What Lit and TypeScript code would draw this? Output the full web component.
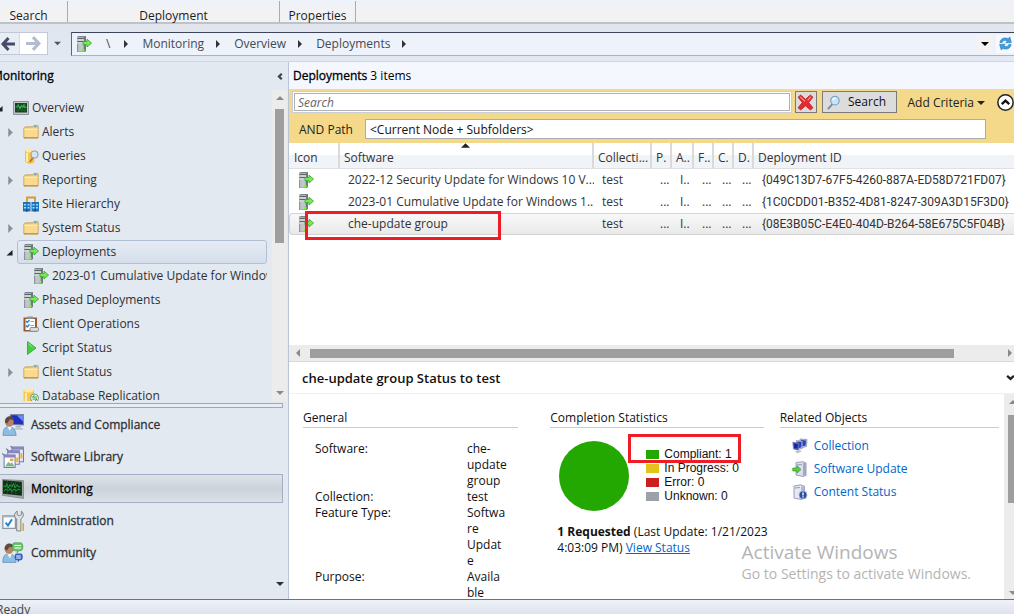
import { LitElement, html, svg, css, nothing } from "lit";
import { customElement, property } from "lit/decorators.js";
import { classMap } from "lit/directives/class-map.js";

const glyphs: Record<string, unknown> = {
  deploy: svg`
    <path d="M1 1 3 0h7v15l-2 1H1z" fill="#aab1b5"/><path d="M8 1l2-1v15l-2 1z" fill="#6f787d"/>
    <path d="M1 1 3 0h7L8 1z" fill="#7c858a"/>
    <path d="M1.500 2.500H8M1.500 5.500H8" stroke="#5d666b"/><path d="M1.500 4H8M1.500 7H8" stroke="#eef2f3"/>
    <path d="M1.500 8H7v7H1.500z" fill="#c0c7ca"/><path d="M1 8h1.200v8H1z" fill="#8d969b"/>
    <path d="M6 13h2.500v2H6z" fill="#7cf51e"/>
    <path d="M7 5.500h4V3.200l4.500 3.900L11 11V8.700H7z" fill="#7fe65a" stroke="#35ae2a" stroke-width=".9"/>`,
  folder: svg`
    <path d="M.8 4 2 2.800h7.500L11 1.300h3.500l.7 1V14H.8z" fill="#efc66d" stroke="#c39a44" stroke-width=".7"/>
    <path d="M1.500 5h13v8.300h-13z" fill="#f9da90"/><path d="M1.500 4.500h13V6h-13z" fill="#fdeab6"/>
    <path d="M1 13.800h14" stroke="#b58a35"/><path d="M11 2.500h2.500" stroke="#5ea0cf"/>`,
  monitor: svg`
    <path d="M.5 1.500h15v13H.5z" fill="#c3c7c9" stroke="#8d9397"/><path d="M2 3h12v9.500H2z" fill="#1c3a28"/>
    <path d="M2.500 7H4l1.200-2L7 8.500 8.500 5.500l1.200 2L11 5l.8 2.300H13.500" fill="none" stroke="#2fc848" stroke-width="1.200"/>
    <path d="M2.500 10h11M5 3v9M9 3v9M12 3v9" stroke="#1f7a35" stroke-width=".6"/>`,
  queries: svg`
    <path d="M2.500 2.500v10.500c0 3 8.500 3 8.500 0V2.500z" fill="#f7c84b" stroke="#dba22c" stroke-width=".5"/><ellipse cx="6.700" cy="2.500" rx="4.200" ry="2" fill="#fde9a0"/>
    <path d="M4 5v9" stroke="#fdebac" stroke-width="2"/>
    <path d="M10 9.500 6.800 14" stroke="#b67a2c" stroke-width="2"/>
    <circle cx="11.500" cy="6.500" r="3.500" fill="#d3e5f3" stroke="#95a5b1" stroke-width="1.200"/>`,
  site: svg`
    <path d="M4 6V1.500h8V6" fill="none" stroke="#d39c2c" stroke-width="1.800"/>
    <path d="M0 6h7.500v9.500H0zM8.500 6H16v9.500H8.500z" fill="#1c74bd"/>
    <path d="M1 8h2v1.500H1zm3.500 0h2v1.500h-2zM1 11h2v1.500H1zm3.500 0h2v1.500h-2zM9.500 8h2v1.500h-2zM13 8h2v1.500h-2zM9.500 11h2v1.500h-2zm3.500 0h2v1.500h-2z" fill="#9fdcff"/>
    <path d="M3 13.500h1.500v2H3zm8.500 0H13v2h-1.500z" fill="#0a3f78"/>`,
  clipboard: svg`
    <path d="M.5 1.500h13.500v14H.5z" fill="#9a5a2b"/><path d="M2.500 3h9.500v11H2.500z" fill="#fff"/>
    <path d="M4.500.5h5.500v2.500H4.500z" fill="#8a949b"/>
    <path d="m3 5 1.200 1.500L6.500 4M3 9.500 4.200 11 6.500 8.500" fill="none" stroke="#2684c6" stroke-width="1.400"/>
    <path d="M7.500 5.500H11M7.500 9.500H11" stroke="#88aaaa"/>
    <rect x="7" y="11.500" width="8.500" height="3.800" rx="1" fill="#d9dde0" stroke="#737b80" stroke-width=".8"/>`,
  script: svg`<path d="M4.500 1.500 13 8l-8.500 6.500z" fill="#44cc44" stroke="#3fae45"/><path d="M5.500 3.500 9.500 7" stroke="#9bf09b"/>`,
  database: svg`
    <path d="M1 2.500v11c0 2.500 9.500 2.500 9.500 0v-11z" fill="#f7c84b" stroke="#dba22c" stroke-width=".5"/><ellipse cx="5.700" cy="2.500" rx="4.700" ry="2" fill="#fde9a0"/>
    <path d="M2.800 5v8.500" stroke="#fdf0c0" stroke-width="2"/>
    <circle cx="11.500" cy="10" r="4" fill="#eef6ee" stroke="#7f8f8f"/><path d="M14 9H9.500l2-1.800M9.500 11H14l-2 1.800" stroke="#27a227" fill="none"/>`,
  assets: svg`
    <path d="M8 .8 20.500.5v10L8 10z" fill="#1d2fc0" stroke="#7d86a0"/><path d="M14 1.200h6v6z" fill="#6f8cf5"/>
    <path d="M13 11.500h5V13h-5zM12 13.500h8v1.300h-8z" fill="#aab3bd"/>
    <path d="M1 20.500C1 14 3 12 6.500 12s6.500 2 7 8.500z" fill="#8fbde2" stroke="#5d8fbc" stroke-width=".7"/>
    <path d="m5 12 2.500 4 2-4z" fill="#eaf4fb"/><circle cx="7" cy="7.700" r="4.200" fill="#b98560"/><path d="M2.800 8c-.5-7 9-7.500 8.500-2L7.500 5 5 9z" fill="#5d4a3f"/>`,
  library: svg`
    <path d="M9.500 1h11v14h-11z" fill="#e7e8f7" stroke="#7778ac"/><path d="M9.500 1h11v2.500h-11z" fill="#8788bd"/>
    <path d="M5.500 4.500h11v13h-11z" fill="#f0f1fa" stroke="#7778ac"/><path d="M5.500 4.500h11V7h-11z" fill="#8788bd"/>
    <path d="M2 8.500h10.500v12H2z" fill="#fff" stroke="#7778ac"/><path d="M2 8.500h10.500V11H2z" fill="#8788bd"/>
    <path d="m3 19.500 3-4.500 2 2 1.500-1.500 2.500 4z" fill="#7ab88a"/><path d="M7.500 12H11v2.500H7.500z" fill="#f0a34c"/>
    <path d="M17.500 7h2v5h-2zM13.500 11h2v4.500h-2z" fill="#f2b13e"/><path d="m0 7 2.500 2M4 2.500l2 2M8 0l1.500 1.500" stroke="#6a6ba0"/>`,
  screen: svg`
    <path d="M.3 1.500 20.500 2.500V19.500L.3 16.500z" fill="#a3a8a6" stroke="#7b817f" stroke-width=".7"/><path d="M1 2.200 19 3.500v13.500L1 15z" fill="#10301a"/>
    <path d="m1.500 7.500 2 1 1-3 1.500 4 1.500-3 2 2 1.500-3 1.500 4 2-3 1.500 2h1.500M2 12.500l2-2 2 1.500 1.500-2 2 3 2-2.500 2 2 2-2 2 1" fill="none" stroke="#1fb53a" stroke-width=".9"/>
    <path d="M5 3v12M9 3.300v12M13 3.600v12" stroke="#167a2a" stroke-width=".5"/>`,
  admin: svg`
    <path d="M.8 5.500h12v12H.8z" fill="#fbfcfd" stroke="#8e979d" stroke-width="1.200"/><path d="M.8 5.500h12v1.500H.8z" fill="#a9b2b8"/>
    <path d="m3.500 12 2.200 2.800L9.500 8.800" fill="none" stroke="#1988d8" stroke-width="1.900"/>
    <path d="M14 20V8.500C11 6.500 11.500 3 14.500 1v3.500l2 1 2-1V1c2.500 2 2.500 5.500-.5 7.500V20z" fill="#dfe2e4" stroke="#7b8286" stroke-width=".9"/>
    <path d="M19.500 12.500H21V20h-1.500z" fill="#e8a920"/>`,
  community: svg`
    <path d="M.8 19.500c0-6.500 2-8 6-8s6.500 2 6.500 8z" fill="#8fbde2" stroke="#5d8fbc" stroke-width=".7"/><path d="m5 11.500 2.500 4 2-4z" fill="#eaf4fb"/>
    <circle cx="6.700" cy="7" r="4.200" fill="#b98560"/><path d="M2.500 7c-.5-7 9-7 8.500-1.500L7.200 4.500 4.800 8z" fill="#5d4a3f"/>
    <path d="M11.500.8H18c2.500 0 2.500 7.500 0 7.500h-2l-1.500 2v-2h-3c-2 0-2-7.500 0-7.500z" fill="#6cc66e" stroke="#45a04b" stroke-width=".7"/>
    <path d="M12 3.300h6M12 5.700h6" stroke="#fff"/><path d="M13.500 11h4.500c2.500 0 2.500 6.500 0 6.500h-1l-2 2v-2h-1.500c-1.800 0-1.800-6.500 0-6.500z" fill="#2f63c0"/><path d="M13.500 13.300H18M13.500 15.300H18" stroke="#fff"/>`,
  collection: svg`
    <path d="m8 1 7 .5-.5 7-6 1.500z" fill="#b9c4dc" stroke="#7f89a5" stroke-width=".7"/><path d="m9 2 5 .4-.4 5.200-4.300 1z" fill="#2640c2"/>
    <path d="m4.500 2.500 6 .8-.3 7.200-5.700 1z" fill="#c8d1e6" stroke="#7f89a5" stroke-width=".7"/><path d="m5.300 3.500 4.300.6-.3 5.500-3.800.7z" fill="#233cc0"/>
    <path d="m.8 4.200 6 1-.3 7L1.500 11z" fill="#4a63d8" stroke="#6f7896" stroke-width=".7"/><path d="m1.800 5.400 4 .7-.3 4.700-3.500-.8z" fill="#1428a8"/>
    <path d="m3 13.500 4-1.500 3 1-4.500 2.500z" fill="#bfc3c8"/>`,
  update: svg`
    <path d="m4 1.500 7-.8 3 1.300v12.500l-3 1-7-1.500z" fill="#dcdeee" stroke="#8689ad" stroke-width=".8"/><path d="M11 2v13l3-1V2z" fill="#a3a5c9"/>
    <path d="m5 4 5-.5" stroke="#9799bf"/><path d="M.8 7H5V4.800L9 8.500 5 12V10H.8z" fill="#57d13c" stroke="#2c9b20" stroke-width=".7"/>`,
  content: svg`
    <path d="m2 2 7-1.200 3.500 1.500V14l-3.500 1.500L2 14z" fill="#e6e8f4" stroke="#8689ad" stroke-width=".8"/><path d="M9 2.500v12l3.500-1V2.300z" fill="#b3b5d3"/><path d="m3 4 5-.5" stroke="#9799bf"/>
    <circle cx="11" cy="11" r="4" fill="#264f9f" stroke="#a8bbe0" stroke-width=".8"/><path d="M11 8.500v3M11 12.300v1.200" stroke="#fff" stroke-width="1.400"/>`,
  back: svg`<path d="M8.500 2 3 8l5.500 6M3.500 8H15" fill="none" stroke="#444c69" stroke-width="3"/>`,
  forward: svg`<path d="M7.500 2 13 8l-5.500 6M12.500 8H1" fill="none" stroke="#b4bccd" stroke-width="3"/>`,
  refresh: svg`
    <path d="M2 7C2.500 2.500 7.500.8 11 3l1.500-2 1.800 6-6 .3 1.500-1.800C7.500 4 5 4.500 4.500 7z" fill="#35a3ea" stroke="#1c6fae" stroke-width=".6"/>
    <path d="M14 9c-.5 4.500-5.500 6.200-9 4l-1.500 2-1.800-6 6-.3-1.500 1.800C8.500 12 11 11.500 11.500 9z" fill="#35a3ea" stroke="#1c6fae" stroke-width=".6"/>`,
  cross: svg`<path d="m1 3 2.500-2L8 5l4.500-4L15 3l-4 5 4 5-2.500 2L8 11l-4.500 4L1 13l4-5z" fill="#e8282c" stroke="#b8272b" stroke-width=".8"/><path d="M3 2.700 7.500 7M13 2.700 10 6" stroke="#ff9c9c"/>`,
  lens: svg`<path d="M7 9.500 2 15" stroke="#7d8a96" stroke-width="2"/><circle cx="9.500" cy="6" r="4.500" fill="#c9e4f7" stroke="#7ba3c4" stroke-width="1.300"/><path d="M7 5.500C7.500 4 9 3 10.500 3.500" stroke="#fff" fill="none" stroke-width="1.300"/>`,
  collapse: svg`<circle cx="8" cy="8" r="7.200" fill="#fff" stroke="#222" stroke-width="1.400"/><path d="M4.500 9.500 8 6.200l3.500 3.300" fill="none" stroke="#111" stroke-width="2.200"/>`,
  chevLeft: svg`<path d="M12 3 7 8l5 5" fill="none" stroke="#444" stroke-width="4"/>`,
  chevDown: svg`<path d="M2 5l6 5.500L14 5" fill="none" stroke="#222" stroke-width="4"/>`,
  triRight: svg`<path d="M4 0l8 8-8 8z" fill="currentColor"/>`,
  triLeft: svg`<path d="M12 0 4 8l8 8z" fill="currentColor"/>`,
  triDown: svg`<path d="M0 4h16L8 12z" fill="currentColor"/>`,
  triUp: svg`<path d="M0 12h16L8 4z" fill="currentColor"/>`,
  triOpen: svg`<path d="M15 2v13H1z" fill="currentColor"/>`,
};

const large = ["assets", "library", "screen", "admin", "community"];

const icon = (name: string, size = 16) => {
  const box = large.includes(name) ? 21 : 16;
  return html`<svg width=${size} height=${size} viewBox="0 0 ${box} ${box}" aria-hidden="true">${glyphs[name]}</svg>`;
};

interface TreeNode { label: string; icon: string; level: number; state?: "open" | "closed"; selected?: boolean; }

const tree: TreeNode[] = [
  { label: "Overview", icon: "monitor", level: 0, state: "open" },
  { label: "Alerts", icon: "folder", level: 1, state: "closed" },
  { label: "Queries", icon: "queries", level: 1 },
  { label: "Reporting", icon: "folder", level: 1, state: "closed" },
  { label: "Site Hierarchy", icon: "site", level: 1 },
  { label: "System Status", icon: "folder", level: 1, state: "closed" },
  { label: "Deployments", icon: "deploy", level: 1, state: "open", selected: true },
  { label: "2023-01 Cumulative Update for Windows", icon: "deploy", level: 2 },
  { label: "Phased Deployments", icon: "deploy", level: 1 },
  { label: "Client Operations", icon: "clipboard", level: 1 },
  { label: "Script Status", icon: "script", level: 1 },
  { label: "Client Status", icon: "folder", level: 1, state: "closed" },
  { label: "Database Replication", icon: "database", level: 1 },
];

const workspaces = [
  ["Assets and Compliance", "assets"],
  ["Software Library", "library"],
  ["Monitoring", "screen"],
  ["Administration", "admin"],
  ["Community", "community"],
];

const deployments = [
  ["2022-12 Security Update for Windows 10 V...", "{049C13D7-67F5-4260-887A-ED58D721FD07}"],
  ["2023-01 Cumulative Update for Windows 1...", "{1C0CDD01-B352-4D81-8247-309A3D15F3D0}"],
  ["che-update group", "{08E3B05C-E4E0-404D-B264-58E675C5F04B}"],
];

const base = css`
  * { box-sizing: border-box; }
  svg { display: block; flex: none; }
  button { font: inherit; color: inherit; border: 0; background: none; padding: 0; margin: 0; display: flex; align-items: center; }
  h1, h2, h3, p, ul, dl, dd { margin: 0; padding: 0; list-style: none; font-weight: normal; }
`;

@customElement("console-sidebar")
export class ConsoleSidebar extends LitElement {
  static styles = [base, css`
    :host { flex: 0 0 289px; display: flex; flex-direction: column; min-height: 0; background: #e2e9f1; border-right: 1px solid #b9c5d6; color: #2e3134; overflow: hidden; }
    .head { display: flex; align-items: center; justify-content: space-between; height: 28px; padding-right: 4px; flex: none; }
    .title { font-size: 12px; color: #000; margin-left: -8px; -webkit-text-stroke: 0.3px #000; }
    .body { flex: 1; display: flex; min-height: 0; }
    .tree { flex: 1; min-width: 0; overflow: hidden; padding: 6px 5px 0 0; }
    .node { display: flex; align-items: center; height: 24px; overflow: hidden; white-space: nowrap; }
    .twisty { flex: none; width: 17px; padding-left: 6px; color: #8c9096; }
    .twisty.open { color: #222; }
    .level0 .twisty { width: 13px; padding: 0; margin-left: -4px; margin-right: 4px; }
    .level2 .twisty { width: 27px; }
    .pill { display: flex; align-items: center; gap: 3px; height: 24px; padding-left: 6px; flex: 1; min-width: 0; overflow: hidden; }
    .level0 .pill { padding-left: 0; }
    .selected .pill { padding-left: 5px; border: 1px solid #b3bfd3; border-radius: 3px; background: linear-gradient(#e6ecf5, #d5deeb); }
    .scroll { flex: 0 0 15px; margin-right: 1px; background: #ececec; display: flex; flex-direction: column; align-items: center; padding: 4px 0; color: #8a8a8a; }
    .thumb { width: 9px; height: 134px; margin: 7px 0 auto 0; background: #9e9e9e; }
    .grip { flex: none; height: 5px; margin: 2px 5px 1px 0; border: 1px solid #a0a8b6; border-left: 0; background: #e8edf4; }
    .spaces { flex: none; padding-right: 5px; }
    .space { width: 100%; height: 32px; gap: 7px; padding-left: 2px; font-size: 12px; -webkit-text-stroke: 0.3px currentColor; }
    .space.current { height: 29px; margin: 1px 0 2px; color: #000; border: 1px solid #a7aec6; border-left: 0; background: linear-gradient(#dfe3e9, #ccd2da 50%, #dce1e8); }
    .more { flex: none; display: flex; justify-content: flex-end; padding: 11px 4px 11px 0; }
  `];

  @property({ attribute: false }) nodes: TreeNode[] = tree;

  render() {
    return html`
      <div class="head"><h2 class="title">Monitoring</h2><button aria-label="Collapse pane">${icon("chevLeft", 9)}</button></div>
      <div class="body">
        <div class="tree" role="tree">
          ${this.nodes.map((n) => html`
            <div class=${classMap({ node: true, [`level${n.level}`]: true, selected: !!n.selected })} role="treeitem">
              <span class=${classMap({ twisty: true, open: n.state === "open" })}>
                ${n.state ? icon(n.state === "open" ? "triOpen" : "triRight", n.state === "open" ? 7 : 9) : nothing}
              </span>
              <span class="pill">${icon(n.icon)}<span>${n.label}</span></span>
            </div>`)}
        </div>
        <div class="scroll">${icon("triUp", 8)}<div class="thumb"></div>${icon("triDown", 8)}</div>
      </div>
      <div class="grip"></div>
      <nav class="spaces">
        ${workspaces.map(([label, glyph]) => html`
          <button class=${classMap({ space: true, current: label === "Monitoring" })}>${icon(glyph, 22)}${label}</button>`)}
      </nav>
      <div class="more"><button aria-label="Configure buttons">${icon("triDown", 8)}</button></div>`;
  }
}

@customElement("deployment-list")
export class DeploymentList extends LitElement {
  static styles = [base, css`
    :host { display: flex; flex-direction: column; flex: 0 0 auto; background: #fff; color: #333; min-width: 0; }
    .title { height: 27px; line-height: 27px; padding-left: 4px; background: #f4f7fd; color: #000; font-size: 12px; }
    .name { -webkit-text-stroke: 0.3px #000; }
    .filters { background: #f4d98a; padding: 2px 0 3px 3px; color: #222; }
    .line { display: flex; align-items: center; }
    .query { flex: 1; min-width: 0; height: 22px; border: 1px solid #c9ced6; outline: 1px solid #aeb3b9; outline-offset: -3px; background: #fff; padding: 0 5px; font: italic 12px "Open Sans", sans-serif; }
    .query::placeholder { color: #666; opacity: 1; }
    .tool { height: 22px; border: 1px solid #7a7a7a; background: #dcdcdc; justify-content: center; color: #111; }
    .clear { width: 22px; margin: 0 5px 0 3px; }
    .find { width: 75px; gap: 7px; padding-right: 6px; }
    .add { gap: 3px; margin: 0 12px 0 11px; padding-top: 2px; }
    .second { height: 27px; padding: 5px 28px 0 7px; }
    .second label { width: 66px; flex: none; padding-top: 2px; }
    .path { flex: 1; min-width: 0; height: 20px; border: 1px solid #a9acb0; background: #fff; padding: 0 4px; font: 12px "Open Sans", sans-serif; color: #111; }
    .wrap { height: 202px; overflow: hidden; }
    table { width: 100%; table-layout: fixed; border-collapse: separate; border-spacing: 0; }
    th, td { font-weight: normal; text-align: left; padding: 0; white-space: nowrap; overflow: hidden; line-height: 16px; }
    th { height: 26px; padding: 4px 0 0 4px; border-right: 2px solid #dadada; border-bottom: 1px solid #e0e0e0; background: linear-gradient(#fff 50%, #f0f4f8 50%); }
    th:first-child { padding-left: 5px; }
    th:last-child { border-right: 0; }
    .sorted { position: relative; overflow: visible; }
    .sort { position: absolute; top: -2px; left: 50%; margin-left: -5px; color: #222; }
    td { height: 22px; padding-left: 8px; }
    td:first-child { padding-left: 9px; }
    td.id { font-family: Roboto, sans-serif; }
    .picked td { border-top: 1px solid #d4d4d4; border-bottom: 1px solid #d4d4d4; background: linear-gradient(#f8f8f8, #e9e9e9); }
    .picked td:first-child { border-left: 1px solid #d4d4d4; border-radius: 4px 0 0 4px; padding-left: 8px; }
    td.marked { position: relative; overflow: visible; }
    .mark { position: absolute; left: -35px; right: 93px; top: -3px; height: 29px; border: 3px solid #ee1c24; }
    .hscroll { display: flex; align-items: center; justify-content: space-between; height: 17px; padding: 0 0 0 5px; background: #ececec; color: #8a8a8a; border-bottom: 1px solid #d9dade; }
    .track { flex: 1; padding: 0 52px 0 8px; }
    .thumb { height: 9px; background: #9e9e9e; }
    .c-icon { width: 51px; } .c-name { width: 254px; } .c-coll { width: 58px; } .c-a { width: 22px; } .c-s { width: 20px; }
  `];

  render() {
    const dots = html`<td>...</td>`;
    return html`
      <h1 class="title"><span class="name">Deployments</span> 3 items</h1>
      <div class="filters">
        <div class="line">
          <input class="query" type="search" placeholder="Search" aria-label="Search deployments">
          <button class="tool clear" aria-label="Clear search">${icon("cross", 17)}</button>
          <button class="tool find">${icon("lens", 15)}Search</button>
          <button class="add">Add Criteria ${icon("triDown", 8)}</button>
          <button aria-label="Hide criteria">${icon("collapse", 17)}</button>
        </div>
        <div class="line second">
          <label for="path">AND Path</label>
          <input id="path" class="path" type="text" .value=${"<Current Node + Subfolders>"}>
        </div>
      </div>
      <div class="wrap">
        <table>
          <colgroup>
            <col class="c-icon"><col class="c-name"><col class="c-coll"><col class="c-s"><col class="c-a"><col class="c-s"><col class="c-s"><col class="c-s"><col>
          </colgroup>
          <thead><tr>
            <th>Icon</th>
            <th class="sorted">Software<span class="sort">${icon("triUp", 9)}</span></th>
            <th>Collecti...</th><th>P.</th><th>A..</th><th>F..</th><th>C.</th><th>D.</th><th>Deployment ID</th>
          </tr></thead>
          <tbody>
            ${deployments.map(([name, id], i) => html`
              <tr class=${classMap({ picked: i === 2 })}>
                <td>${icon("deploy")}</td>
                <td class=${classMap({ marked: i === 2 })}>${name}${i === 2 ? html`<span class="mark"></span>` : nothing}</td>
                <td>test</td>${dots}<td>I..</td>${dots}${dots}${dots}
                <td class="id">${id}</td>
              </tr>`)}
          </tbody>
        </table>
      </div>
      <div class="hscroll">${icon("triLeft", 8)}<div class="track"><div class="thumb"></div></div>${icon("triRight", 8)}</div>`;
  }
}

@customElement("deployment-detail")
export class DeploymentDetail extends LitElement {
  static styles = [base, css`
    :host { flex: 1; min-height: 0; display: flex; flex-direction: column; background: #fff; color: #111; position: relative; overflow: hidden; }
    .head { display: flex; align-items: center; justify-content: space-between; height: 32px; flex: none; padding-left: 13px; border-bottom: 1px solid #f1f1f1; }
    .title { font-size: 13px; font-weight: 600; color: #111; }
    .head button { margin-right: -1px; }
    .body { flex: 1; min-height: 0; display: flex; }
    .cols { flex: 1; min-width: 0; overflow: hidden; display: grid; grid-template-columns: minmax(0, 232fr) minmax(0, 214fr) minmax(0, 220fr); column-gap: 16px; padding: 14px 5px 0 14px; align-items: start; }
    .general { padding-right: 16px; }
    h3 { font-size: 12px; line-height: 19px; border-bottom: 1px solid #b5d3e5; }
    dl { display: grid; grid-template-columns: 152px 48px; padding: 13px 0 0 12px; line-height: 16px; }
    dd { white-space: pre-line; }
    .chart { display: flex; position: relative; padding: 13px 0 0 9px; gap: 17px; }
    .legend { padding-top: 6px; font: 12px/14px "Liberation Sans", sans-serif; }
    .legend li { display: flex; align-items: center; gap: 5px; }
    .swatch { width: 13px; height: 9px; }
    .ok { background: #22a800; } .busy { background: #e2c41b; } .bad { background: #cb1f20; } .none { background: #9da2aa; }
    .mark { position: absolute; left: 78px; top: 6px; width: 113px; height: 29px; border: 3px solid #ee1c24; }
    .summary { padding: 13px 0 0 7px; margin-right: -8px; line-height: 16px; }
    a { color: #0066cc; }
    .links { padding: 6px 0 0 12px; }
    .links a { display: flex; align-items: center; gap: 6px; height: 23px; text-decoration: none; }
    .scroll { flex: 0 0 10px; background: #ececec; display: flex; flex-direction: column; align-items: flex-end; padding: 4px 0 2px; color: #8a8a8a; overflow: hidden; }
    .thumb { width: 6px; height: 88px; margin: 9px 0 auto; background: #9e9e9e; }
    .scroll svg { margin-right: -3px; }
    .notice { position: absolute; right: 43px; bottom: 14px; color: #b4b4b4; font-size: 14px; line-height: 22px; }
    .big { font-size: 19px; }
  `];

  render() {
    const facts = [["Software:", "che-\nupdate\ngroup"], ["Collection:", "test"], ["Feature Type:", "Softwa\nre\nUpdat\ne"], ["Purpose:", "Availa\nble"]];
    const counts = [["ok", "Compliant: 1"], ["busy", "In Progress: 0"], ["bad", "Error: 0"], ["none", "Unknown: 0"]];
    const related = [["collection", "Collection"], ["update", "Software Update"], ["content", "Content Status"]];
    return html`
      <div class="head"><h2 class="title">che-update group Status to test</h2><button aria-label="Hide details">${icon("chevDown", 9)}</button></div>
      <div class="body">
        <div class="cols">
          <section class="general"><h3>General</h3>
            <dl>${facts.map(([k, v]) => html`<dt>${k}</dt><dd>${v}</dd>`)}</dl>
          </section>
          <section><h3>Completion Statistics</h3>
            <div class="chart">
              <svg width="70" height="70" viewBox="0 0 70 70" role="img" aria-label="All compliant"><circle cx="35" cy="35" r="35" fill="#22a800"/></svg>
              <ul class="legend">${counts.map(([c, t]) => html`<li><span class="swatch ${c}"></span>${t}</li>`)}</ul>
              <span class="mark"></span>
            </div>
            <p class="summary"><b>1 Requested</b> (Last Update: 1/21/2023 4:03:09 PM) <a href="#status">View Status</a></p>
          </section>
          <section><h3>Related Objects</h3>
            <div class="links">${related.map(([g, t]) => html`<a href="#${g}">${icon(g)}${t}</a>`)}</div>
          </section>
        </div>
        <div class="scroll">${icon("triUp", 8)}<div class="thumb"></div>${icon("triDown", 8)}</div>
      </div>
      <div class="notice"><div class="big">Activate Windows</div><div>Go to Settings to activate Windows.</div></div>`;
  }
}

@customElement("app-root")
export class AppRoot extends LitElement {
  static styles = [base, css`
    :host { display: flex; flex-direction: column; height: 100vh; overflow: hidden; font: 12px/16px "Open Sans", "Noto Sans", sans-serif; color: #222; background: #e2e9f1; }
    .ribbon { flex: none; display: flex; height: 24px; background: linear-gradient(#eef3fa, #f2f2f4 45%); border-bottom: 2px solid #bfc2c8; }
    .group { display: flex; justify-content: center; align-items: center; padding-top: 8px; border-right: 1px solid #a6abb4; margin-top: 1px; color: #1b1b1b; }
    .search { width: 68px; padding-right: 10px; } .deployment { width: 212px; } .properties { width: 76px; }
    .bar { flex: none; display: flex; align-items: center; height: 38px; padding: 2px 0 0; background: linear-gradient(#e0e5ee, #e2e9f2); border-bottom: 1px solid #cfd7e3; }
    .history { display: flex; border: 1px solid #c1c8d8; border-left: 0; background: #fff; }
    .history button { height: 21px; width: 27px; justify-content: center; }
    .history .back { width: 20px; background: #e9edf5; justify-content: flex-start; border-right: 1px solid #d4d9e5; }
    .recent { margin: 0 10px 0 6px; color: #555; }
    .address { flex: 1; min-width: 0; display: flex; align-items: center; height: 24px; border: 1px solid #aab2c1; border-top-color: #3c4458; border-right: 0; border-left-color: #5c6478; background: #eef2fb; padding-left: 4px; color: #444a52; }
    .root { margin: 0 12px 0 14px; }
    .crumb { margin: 0 10px 0 12px; color: inherit; text-decoration: none; }
    .spacer { flex: 1; }
    .arrow { color: #333; }
    .drop { width: 14px; height: 18px; justify-content: center; background: #f3f3f3; color: #000; margin-right: 4px; }
    .reload { width: 18px; height: 18px; background: #f7f9fd; justify-content: center; }
    .panes { flex: 1; min-height: 0; display: flex; border-bottom: 1px solid #6b7283; }
    .main { flex: 1; min-width: 0; display: flex; flex-direction: column; }
    .status { flex: none; height: 14px; overflow: hidden; background: linear-gradient(#eef2f8, #dde3ec); line-height: 20px; }
    .status span { margin-left: -4px; color: #444; }
  `];

  render() {
    const arrow = html`<span class="arrow">${icon("triRight", 8)}</span>`;
    return html`
      <header class="ribbon">
        <div class="group search">Search</div><div class="group deployment">Deployment</div><div class="group properties">Properties</div>
      </header>
      <div class="bar">
        <div class="history">
          <button class="back" aria-label="Back">${icon("back", 16)}</button>
          <button aria-label="Forward">${icon("forward", 17)}</button>
        </div>
        <button class="recent" aria-label="Recent locations">${icon("triDown", 7)}</button>
        <nav class="address">
          ${icon("deploy")}<span class="root">\\</span>${arrow}
          ${["Monitoring", "Overview", "Deployments"].map((c) => html`<a class="crumb" href="#${c}">${c}</a>${arrow}`)}
          <span class="spacer"></span>
          <button class="drop" aria-label="Previous locations">${icon("triDown", 8)}</button>
          <button class="reload" aria-label="Refresh">${icon("refresh", 15)}</button>
        </nav>
      </div>
      <div class="panes">
        <console-sidebar></console-sidebar>
        <main class="main"><deployment-list></deployment-list><deployment-detail></deployment-detail></main>
      </div>
      <footer class="status"><span>Ready</span></footer>`;
  }
}
